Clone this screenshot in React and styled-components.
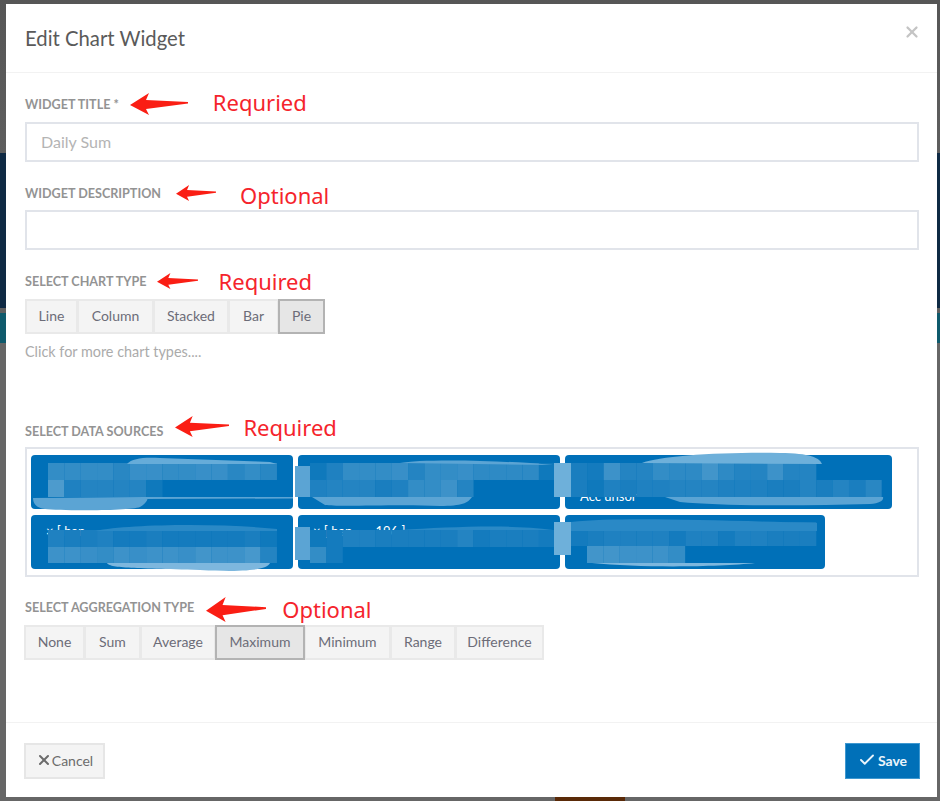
import React from "react";
import styled, { createGlobalStyle } from "styled-components";
import { Check, X } from "lucide-react";

const Global = createGlobalStyle`
  html, body { margin: 0; padding: 0; }
  body { font-family: "Lato", "Noto Sans", sans-serif; background: #5a5a5a; }
  * { box-sizing: border-box; }
`;

const Backdrop = styled.div`
  width: 940px;
  height: 801px;
  padding: 4px 3px 4px 6px;
  background:
    linear-gradient(90deg, transparent 555px, #5a2a08 555px, #5a2a08 625px, transparent 625px) bottom / 100% 4px no-repeat,
    linear-gradient(180deg, #565656 0, #5e5e5e 153px, #0f2a44 153px, #0f2a44 308px, #5f5f5f 308px, #5f5f5f 313px,
      #0f5a6c 313px, #0f5a6c 343px, #666 343px, #666 100%);
`;

const Modal = styled.div`
  width: 931px;
  height: 793px;
  background: #fff;
  display: flex;
  flex-direction: column;
`;

const Header = styled.header`
  height: 69px;
  flex: none;
  display: flex;
  align-items: center;
  justify-content: space-between;
  padding: 0 16px 0 19px;
  border-bottom: 1px solid #f2f2f2;
`;

const Title = styled.h4`
  margin: 0;
  font-size: 20.3px;
  font-weight: 400;
  color: #5a5a5a;
`;

const Close = styled.span`
  display: flex;
  color: #c4c4c4;
  margin-bottom: 12px;
`;

const Body = styled.div`
  flex: 1;
  padding: 19px 18px 0 19px;
`;

const LabelRow = styled.div`
  height: 24px;
  display: flex;
  align-items: center;
  margin-top: ${(p) => p.$top || 0}px;
  margin-bottom: ${(p) => p.$bottom ?? 6}px;
`;

const Label = styled.label`
  font-size: 12.6px;
  font-weight: 700;
  color: #939393;
  text-transform: uppercase;
  white-space: nowrap;
`;

const ArrowSvg = styled.svg`
  flex: none;
  width: ${(p) => p.$w}px;
  height: ${(p) => p.$h}px;
  margin-left: ${(p) => p.$left}px;
  margin-top: ${(p) => p.$shift || 0}px;
  margin-bottom: ${(p) => p.$lift || 0}px;
`;

const Note = styled.span`
  font-family: "Noto Sans", sans-serif;
  font-size: 22px;
  line-height: 24px;
  color: #f5242c;
  margin-left: ${(p) => p.$left}px;
  margin-top: ${(p) => p.$shift || 0}px;
  margin-bottom: ${(p) => p.$lift || 0}px;
  white-space: nowrap;
`;

const Input = styled.input`
  display: block;
  width: 100%;
  height: ${(p) => p.$h || 40}px;
  border: 2px solid #e1e4ea;
  padding: 0 14px 2px;
  font: 400 16px "Lato", sans-serif;
  color: #555;
  background: #fff;
  outline: none;
  &::placeholder { color: #b4b4b4; opacity: 1; }
`;

const ButtonGroup = styled.div`
  display: flex;
  margin-left: ${(p) => p.$left || 0}px;
`;

const ToggleButton = styled.button`
  width: ${(p) => p.$w}px;
  height: 35px;
  padding: 0 0 2px;
  font: 400 14px "Lato", sans-serif;
  color: #6c6c78;
  background: ${(p) => (p.$active ? "#e6e6e6" : "#f4f4f4")};
  border: 2px solid ${(p) => (p.$active ? "#b3b3b3" : "#e9e9e9")};
  margin-left: ${(p) => (p.$first ? 0 : -1)}px;
  position: relative;
  z-index: ${(p) => (p.$active ? 1 : 0)};
`;

const Hint = styled.p`
  margin: 8px 0 0;
  height: 19px;
  line-height: 19px;
  font-size: 14.4px;
  color: #ababab;
`;

const ChipBox = styled.div`
  position: relative;
  height: 130px;
  border: 2px solid #e1e4ea;
  padding: 6px 4px;
  display: flex;
  flex-wrap: wrap;
  gap: 6px 5px;
  align-content: flex-start;
  overflow: hidden;
`;

const Chip = styled.div`
  width: ${(p) => p.$w}px;
  height: 54px;
  padding: 4px 15px;
  border-radius: 4px;
  background: #0070b8;
  color: #fff;
  font-size: 13px;
  line-height: 25px;
  white-space: pre;
  overflow: hidden;
`;

const Redaction = styled.svg`
  position: absolute;
  inset: -2px;
  width: 894px;
  height: 130px;
  pointer-events: none;
  filter: blur(0.4px);
`;

const Footer = styled.footer`
  height: 75px;
  flex: none;
  display: flex;
  align-items: flex-start;
  justify-content: space-between;
  padding: 20px 17px 0 18px;
  border-top: 1px solid #f2f2f2;
`;

const CancelButton = styled.button`
  width: 81px;
  height: 36px;
  display: flex;
  align-items: center;
  justify-content: center;
  gap: 0;
  padding: 0 0 2px;
  font: 400 14px "Lato", sans-serif;
  color: #6c6c6c;
  background: #f4f4f4;
  border: 2px solid #e6e6e6;
`;

const SaveButton = styled.button`
  width: 75px;
  height: 36px;
  display: flex;
  align-items: center;
  justify-content: center;
  gap: 2px;
  padding: 0 0 2px;
  font: 700 14px "Lato", sans-serif;
  color: #eaf4fb;
  background: #0070b8;
  border: 1px solid #3f98d0;
`;

function Arrow({ w, h, left, shift, lift }) {
  return (
    <ArrowSvg viewBox="0 0 58 22" preserveAspectRatio="none" $w={w} $h={h} $left={left} $shift={shift} $lift={lift}>
      <path d="M0 12 L19 0 L16 7 L58 9 L58 10.5 L16 16 L19 22 Z" fill="#fa1e14" />
    </ArrowSvg>
  );
}

const mix = (t) => {
  const c = [0, 112, 184].map((v) => Math.round(v + (255 - v) * t));
  return `rgb(${c.join(",")})`;
};

const mosaics = [
  { x: 48, y: 463, h: 17, tones: [0.2, 0.2, 0.2, 0.2, 0.16, 0.22, 0.22, 0.2, 0.2, 0.22, 0.22, 0.16, 0.2, 0.16] },
  { x: 48, y: 480, h: 17, tones: [0.3, 0.12, 0.14, 0.14, 0.14, 0.14, 0.06] },
  { x: 48, y: 530, h: 17, tones: [0.12, 0.1, 0.1, 0.12, 0.08, 0.08, 0.1, 0.08, 0.08, 0.08, 0.08, 0.08, 0.1, 0.06] },
  { x: 48, y: 547, h: 16, tones: [0.24, 0.24, 0.22, 0.2, 0.24, 0.22, 0.24, 0.24, 0.22, 0.26, 0.24, 0.24, 0.28, 0.14] },
  { x: 310, y: 463, h: 17, tones: [0.06, 0.12, 0.2, 0.2, 0.2, 0.22, 0.14, 0.2, 0.2, 0.22, 0.18, 0.18, 0.18, 0.18, 0.06] },
  { x: 310, y: 480, h: 17, tones: [0.12, 0.14, 0.14, 0.14, 0.1, 0.12, 0.2, 0.2, 0.24, 0.14] },
  { x: 310, y: 530, h: 17, tones: [0.06, 0.08, 0.12, 0.12, 0.1, 0.1, 0.1, 0.1, 0.1, 0.14, 0.08, 0.1, 0.1, 0.1, 0.08] },
  { x: 310, y: 547, h: 16, tones: [0.2, 0.08] },
  { x: 571, y: 463, h: 17, tones: [0.1, 0.08, 0.24, 0.14, 0.14, 0.2, 0.18, 0.18, 0.26, 0.18, 0.14, 0.14, 0.24, 0.14, 0.14] },
  { x: 571, y: 480, h: 17, tones: [0.1, 0.06, 0.12, 0.1, 0.12, 0.12, 0.14, 0.14, 0.14, 0.12, 0.12, 0.12, 0.1, 0.1, 0.14, 0.1, 0.14, 0.1, 0.16] },
  { x: 571, y: 522, h: 24, tones: [0.08, 0.1, 0.12, 0.12, 0.12, 0.12, 0.08, 0.12, 0.12, 0.08, 0.12, 0.12, 0.1, 0.1, 0.1] },
  { x: 587, y: 546, h: 17, tones: [0.26, 0.26, 0.24, 0.24, 0.24, 0.2] },
];

const strokes = [
  { c: "#5ba4d4", d: "M33 498 L145 497 C150 497 147 503 140 507 C130 511 60 511 45 509 C36 508 33 503 33 498Z" },
  { c: "#5ba4d4", d: "M145 497 L293 497 L293 498.5 L145 499Z" },
  { c: "#66acd9", d: "M127 464 C132 458 145 457 160 458 L270 462 L277 464Z" },
  { c: "#2a89c6", d: "M95 531 C130 524 220 523 277 529 L277 531Z" },
  { c: "#7db7de", d: "M107 563 C110 568 130 568 200 570 C255 573 268 568 270 563Z" },
  { c: "#5ba4d4", d: "M400 463 C420 459 500 460 553 465Z" },
  { c: "#5ba4d4", d: "M312 497 L472 497 C468 503 462 506 440 506 C400 504 340 507 325 505Z" },
  { c: "#2a89c6", d: "M400 530 C450 527 510 524 553 530Z" },
  { c: "#6eb0da", d: "M642 463 C660 456 720 452 780 453 C810 453 820 458 822 464Z" },
  { c: "#5ba4d4", d: "M665 497 L883 497 C884 500 880 503 870 504 C800 506 720 506 680 502Z" },
  { c: "#2a89c6", d: "M571 522 C620 517 700 520 817 523 L817 531 L571 531Z" },
  { c: "#7db7de", d: "M592 563 L755 563 C720 567 640 568 592 563Z" },
  { c: "#5ba4d4", d: "M295 466 L310 466 L310 497 L295 497Z" },
  { c: "#5ba4d4", d: "M295 527 L310 527 L310 560 L295 560Z" },
  { c: "#6eb0da", d: "M554 463 L571 463 L571 497 L554 497Z" },
  { c: "#6eb0da", d: "M554 522 L571 522 L571 555 L554 555Z" },
];

const chipRows = [
  { w: 262, lines: ["", ""] },
  { w: 262, lines: ["", ""] },
  { w: 327, lines: ["", "Acc unsor"] },
  { w: 262, lines: ["× [ han", ""] },
  { w: 262, lines: ["× [ han       196 ]", ""] },
  { w: 260, lines: ["", ""] },
];

const chartTypes = [
  ["Line", 53], ["Column", 77], ["Stacked", 76], ["Bar", 51], ["Pie", 47, true],
];
const aggregations = [
  ["None", 61], ["Sum", 57], ["Average", 76], ["Maximum", 90, true], ["Minimum", 87], ["Range", 66], ["Difference", 89],
];

export default function App() {
  return (
    <>
      <Global />
      <Backdrop>
        <Modal>
          <Header>
            <Title>Edit Chart Widget</Title>
            <Close><X size={18} strokeWidth={3} /></Close>
          </Header>
          <Body>
            <LabelRow>
              <Label>Widget Title *</Label>
              <Arrow w={58} h={22} left={11} />
              <Note $left={25} $lift={4}>Requried</Note>
            </LabelRow>
            <Input placeholder="Daily Sum" />

            <LabelRow $top={19} $bottom={5}>
              <Label>Widget Description</Label>
              <Arrow w={40} h={16} left={15} />
              <Note $left={24} $shift={4}>Optional</Note>
            </LabelRow>
            <Input />

            <LabelRow $top={19}>
              <Label>Select Chart Type</Label>
              <Arrow w={41} h={16} left={10} />
              <Note $left={21}>Required</Note>
            </LabelRow>
            <ButtonGroup>
              {chartTypes.map(([t, w, a], i) => (
                <ToggleButton key={t} $w={w} $active={a} $first={i === 0}>{t}</ToggleButton>
              ))}
            </ButtonGroup>
            <Hint>Click for more chart types....</Hint>

            <LabelRow $top={58} $bottom={4}>
              <Label>Select Data Sources</Label>
              <Arrow w={54} h={21} left={12} lift={10} />
              <Note $left={14} $lift={8}>Required</Note>
            </LabelRow>
            <ChipBox>
              {chipRows.map((c, i) => (
                <Chip key={i} $w={c.w}>
                  {c.lines[0] || "\u00a0"}<br />{c.lines[1] || "\u00a0"}
                </Chip>
              ))}
              <Redaction viewBox="25 447 894 130">
                {mosaics.flatMap((m, r) =>
                  m.tones.map((t, i) => (
                    <rect key={`${r}-${i}`} x={m.x + i * 16.35} y={m.y} width={16.4} height={m.h} fill={mix(t)} />
                  ))
                )}
                {strokes.map((s, i) => <path key={i} d={s.d} fill={s.c} />)}
              </Redaction>
            </ChipBox>

            <LabelRow $top={18}>
              <Label>Select Aggregation Type</Label>
              <Arrow w={60} h={25} left={12} shift={5} />
              <Note $left={16} $shift={4}>Optional</Note>
            </LabelRow>
            <ButtonGroup $left={-1}>
              {aggregations.map(([t, w, a], i) => (
                <ToggleButton key={t} $w={w} $active={a} $first={i === 0}>{t}</ToggleButton>
              ))}
            </ButtonGroup>
          </Body>
          <Footer>
            <CancelButton><X size={16} strokeWidth={3} />Cancel</CancelButton>
            <SaveButton><Check size={18} strokeWidth={2.5} />Save</SaveButton>
          </Footer>
        </Modal>
      </Backdrop>
    </>
  );
}
